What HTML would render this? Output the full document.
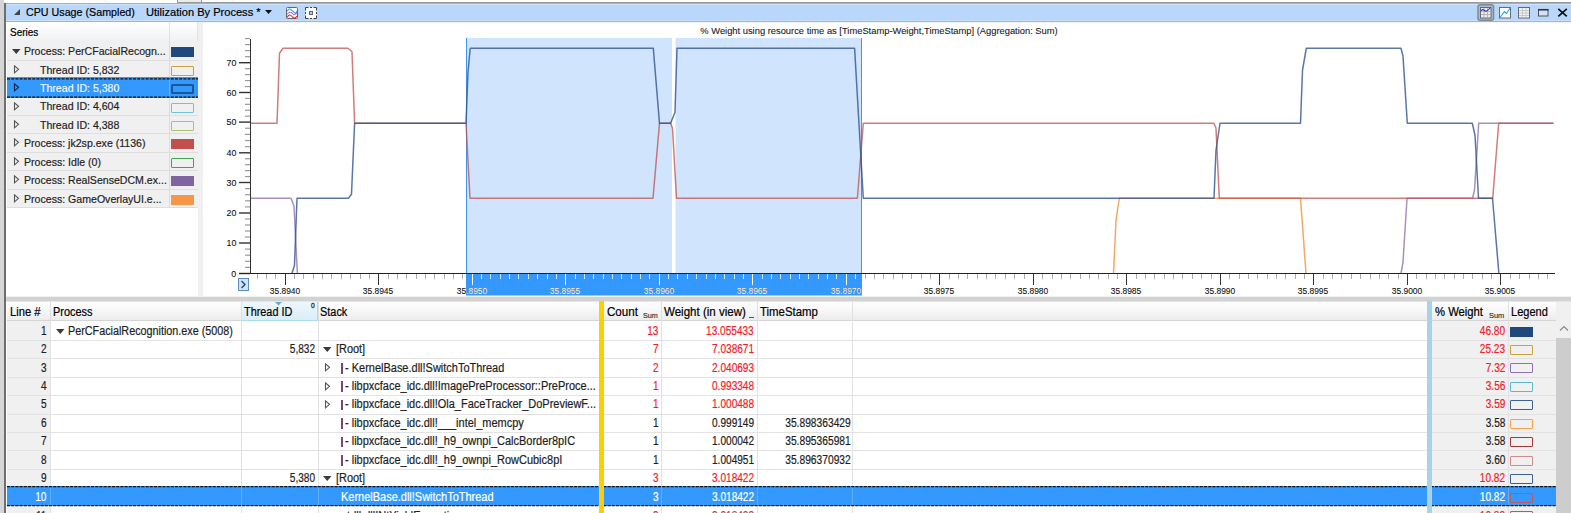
<!DOCTYPE html>
<html><head><meta charset="utf-8">
<style>
*{margin:0;padding:0;box-sizing:border-box}
html,body{width:1571px;height:513px;overflow:hidden;background:#fff}
body{position:relative;font-family:"Liberation Sans",sans-serif;font-size:11px;color:#1e1e1e}
.a{position:absolute}
.t{position:absolute;white-space:nowrap}
.num{letter-spacing:-0.4px}
</style></head><body>
<div class="a" style="left:0px;top:0px;width:4px;height:513px;background:#d6d6d6"></div>
<div class="a" style="left:4px;top:3px;width:2px;height:510px;background:#6e6e6e"></div>
<div class="a" style="left:177px;top:0px;width:25px;height:3px;background:#ebebeb;border:1px solid #9a9a9a;border-top:none"></div>
<div class="a" style="left:202px;top:2px;width:1369px;height:1px;background:#9a9a9a"></div>
<div class="a" style="left:6px;top:3px;width:1565px;height:19px;background:#b8d7fa;border-top:1px solid #8fb3e0;border-bottom:1px solid #93b8e6"></div>
<div class="a" style="left:6px;top:4px;width:1565px;height:1px;background:#cde3fb"></div>
<div class="a" style="left:6px;top:20px;width:1565px;height:1px;background:#c8e0fb"></div>
<svg class="a" style="left:13px;top:8px" width="8" height="8"><path d="M7 1 L7 7 L1 7 Z" fill="#444"/></svg>
<div class="t" style="left:26.2px;top:3.68px;font-size:11.3px;line-height:16px;color:#000;-webkit-text-stroke:0.2px #000;transform:scaleX(0.9476);transform-origin:0 0;">CPU Usage (Sampled)</div>
<div class="t" style="left:146.2px;top:3.68px;font-size:11.3px;line-height:16px;color:#000;-webkit-text-stroke:0.2px #000;transform:scaleX(0.9811);transform-origin:0 0;">Utilization By Process *</div>
<svg class="a" style="left:265px;top:10px" width="8" height="5"><path d="M0 0 L7 0 L3.5 4 Z" fill="#111"/></svg>
<svg class="a" style="left:286px;top:7px" width="12" height="12">
<rect x="0.5" y="0.5" width="11" height="11" rx="1" fill="#fff" stroke="#666"/>
<path d="M1 4.5 Q3 0.5 5.5 3 T11 7" stroke="#30b4ea" fill="none" stroke-width="1.1"/>
<path d="M1 7.5 Q4 3.5 6.5 6.5 T11 4" stroke="#a468d0" fill="none" stroke-width="1.1"/>
<path d="M1 10.5 Q3.5 6 6 9.5 T11 9" stroke="#f02020" fill="none" stroke-width="1.1"/>
</svg>
<svg class="a" style="left:305px;top:7px" width="12" height="12">
<rect x="0.5" y="0.5" width="11" height="11" fill="#fff"/>
<path d="M0.5 3.5 V0.5 H3.5 M8.5 0.5 H11.5 V3.5 M11.5 8.5 V11.5 H8.5 M3.5 11.5 H0.5 V8.5 M5 0.5 H7 M11.5 5 V7 M5 11.5 H7 M0.5 5 V7" stroke="#444" fill="none"/>
<rect x="4.5" y="4.5" width="3" height="3" fill="#a8d0f0" stroke="#666"/>
</svg>
<svg class="a" style="left:1477px;top:4px" width="94" height="17">
<rect x="1" y="0.75" width="15.5" height="15.5" rx="2" fill="#a9bdd2" stroke="#7d8a99" stroke-width="1.5"/>
<rect x="3.5" y="3.5" width="10.5" height="10.5" fill="#ececec" stroke="#6a6a6a"/>
<path d="M4 7.5 h9.5 M4 10.5 h9.5 M7 4 v9.5 M10.5 4 v9.5" stroke="#b0b0b0" stroke-width="0.9"/>
<path d="M4 7 Q5.5 4.5 7.5 6.5 T13.5 3.5" stroke="#3838c8" fill="none" stroke-width="1.1"/>
<rect x="22.5" y="3.5" width="11" height="10.5" fill="#fff" stroke="#6a6a6a"/>
<path d="M23 13.5 L27.5 7.5 L29.5 9.5 L33.5 3.5" stroke="#1aa0e8" fill="none" stroke-width="1.1"/>
<rect x="41.5" y="3.5" width="11" height="10.5" fill="#f2f2f2" stroke="#6a6a6a"/>
<path d="M42 6.5 h10 M42 9 h10 M42 11.5 h10 M45.5 4 v9.5 M49 4 v9.5" stroke="#c4c4c4" stroke-width="0.9"/>
<rect x="61.5" y="5.5" width="9.5" height="6.5" fill="#cfe2f8" stroke="#555"/>
<path d="M61 5.75 h10.5" stroke="#333" stroke-width="1.6"/>
<path d="M81.3 4.8 L89.8 12.4 M89.8 4.8 L81.3 12.4" stroke="#111" stroke-width="1.7"/>
</svg>
<div class="a" style="left:7px;top:22px;width:191px;height:19.5px;background:linear-gradient(#ffffff,#eff1f4);border-bottom:1px solid #d9d9d9;border-right:1px solid #e2e2e2"></div>
<div class="a" style="left:169px;top:22px;width:1px;height:19px;background:#e2e2e2"></div>
<div class="t" style="left:9.7px;top:24.02px;font-size:11.5px;line-height:16px;color:#000;-webkit-text-stroke:0.2px #000;transform:scaleX(0.8682);transform-origin:0 0;">Series</div>
<div class="a" style="left:198px;top:22px;width:5px;height:274px;background:#f0f0f0"></div>
<div class="a" style="left:7px;top:41.2px;width:191px;height:166.96px;background:#f0f0f0"></div>
<div class="a" style="left:7px;top:59.64px;width:191px;height:1px;background:#dedede"></div>
<div class="a" style="left:7px;top:114.96px;width:191px;height:1px;background:#dedede"></div>
<div class="a" style="left:7px;top:133.4px;width:191px;height:1px;background:#dedede"></div>
<div class="a" style="left:7px;top:151.84px;width:191px;height:1px;background:#dedede"></div>
<div class="a" style="left:7px;top:170.28px;width:191px;height:1px;background:#dedede"></div>
<div class="a" style="left:7px;top:188.72px;width:191px;height:1px;background:#dedede"></div>
<div class="a" style="left:7px;top:207.16px;width:191px;height:1px;background:#dedede"></div>
<div class="a" style="left:169px;top:41.2px;width:1px;height:165.96px;background:#dcdcdc"></div>
<div class="a" style="left:7px;top:77px;width:191px;height:21px;background:#3399ff"></div>
<div class="a" style="left:169px;top:77px;width:1px;height:21px;background:rgba(255,255,255,0.25)"></div>
<svg class="a" style="left:12px;top:49.00px" width="9" height="6"><path d="M0 0 L8.5 0 L4.25 5 Z" fill="#3b3b3b"/></svg>
<div class="t" style="left:24.4px;top:43.15px;font-size:11.7px;line-height:16px;color:#1e1e1e;-webkit-text-stroke:0.2px #1e1e1e;transform:scaleX(0.9050);transform-origin:0 0;">Process: PerCFacialRecogn...</div>
<div class="a" style="left:171px;top:47.2px;width:23px;height:10px;background:#1f497d"></div>
<svg class="a" style="left:13px;top:64.64px" width="7" height="9"><path d="M1.5 0.8 L5.5 4.3 L1.5 7.8 Z" fill="none" stroke="#555" stroke-width="1.1"/></svg>
<div class="t" style="left:40px;top:61.59px;font-size:11.7px;line-height:16px;color:#1e1e1e;-webkit-text-stroke:0.2px #1e1e1e;transform:scaleX(0.9050);transform-origin:0 0;">Thread ID: 5,832</div>
<div class="a" style="left:171px;top:65.64px;width:23px;height:10px;border:1.5px solid #c9a13e;border-radius:1px;background:#f0f0f0"></div>
<svg class="a" style="left:13px;top:83.08px" width="7" height="9"><path d="M1.5 0.8 L5.5 4.3 L1.5 7.8 Z" fill="none" stroke="#10203a" stroke-width="1.1"/></svg>
<div class="t" style="left:40px;top:80.03px;font-size:11.7px;line-height:16px;color:#f4f8ff;-webkit-text-stroke:0.2px #f4f8ff;transform:scaleX(0.9050);transform-origin:0 0;">Thread ID: 5,380</div>
<div class="a" style="left:171px;top:84.08px;width:23px;height:10px;border:2px solid #1f5590;border-radius:1.5px;background:#3399ff"></div>
<svg class="a" style="left:13px;top:101.52px" width="7" height="9"><path d="M1.5 0.8 L5.5 4.3 L1.5 7.8 Z" fill="none" stroke="#555" stroke-width="1.1"/></svg>
<div class="t" style="left:40px;top:98.47px;font-size:11.7px;line-height:16px;color:#1e1e1e;-webkit-text-stroke:0.2px #1e1e1e;transform:scaleX(0.9050);transform-origin:0 0;">Thread ID: 4,604</div>
<div class="a" style="left:171px;top:102.52px;width:23px;height:10px;border:1.5px solid #71c1d8;border-radius:1px;background:#f0f0f0"></div>
<svg class="a" style="left:13px;top:119.96px" width="7" height="9"><path d="M1.5 0.8 L5.5 4.3 L1.5 7.8 Z" fill="none" stroke="#555" stroke-width="1.1"/></svg>
<div class="t" style="left:40px;top:116.91px;font-size:11.7px;line-height:16px;color:#1e1e1e;-webkit-text-stroke:0.2px #1e1e1e;transform:scaleX(0.9050);transform-origin:0 0;">Thread ID: 4,388</div>
<div class="a" style="left:171px;top:120.96px;width:23px;height:10px;border:1.5px solid #a6c273;border-radius:1px;background:#f0f0f0"></div>
<svg class="a" style="left:13px;top:138.40px" width="7" height="9"><path d="M1.5 0.8 L5.5 4.3 L1.5 7.8 Z" fill="none" stroke="#555" stroke-width="1.1"/></svg>
<div class="t" style="left:24.4px;top:135.35px;font-size:11.7px;line-height:16px;color:#1e1e1e;-webkit-text-stroke:0.2px #1e1e1e;transform:scaleX(0.9050);transform-origin:0 0;">Process: jk2sp.exe (1136)</div>
<div class="a" style="left:171px;top:139.4px;width:23px;height:10px;background:#c0504d"></div>
<svg class="a" style="left:13px;top:156.84px" width="7" height="9"><path d="M1.5 0.8 L5.5 4.3 L1.5 7.8 Z" fill="none" stroke="#555" stroke-width="1.1"/></svg>
<div class="t" style="left:24.4px;top:153.79px;font-size:11.7px;line-height:16px;color:#1e1e1e;-webkit-text-stroke:0.2px #1e1e1e;transform:scaleX(0.9050);transform-origin:0 0;">Process: Idle (0)</div>
<div class="a" style="left:171px;top:157.84px;width:23px;height:10px;border:1.5px solid #3fa454;border-radius:1px;background:#f0f0f0"></div>
<svg class="a" style="left:13px;top:175.28px" width="7" height="9"><path d="M1.5 0.8 L5.5 4.3 L1.5 7.8 Z" fill="none" stroke="#555" stroke-width="1.1"/></svg>
<div class="t" style="left:24.4px;top:172.23px;font-size:11.7px;line-height:16px;color:#1e1e1e;-webkit-text-stroke:0.2px #1e1e1e;transform:scaleX(0.9050);transform-origin:0 0;">Process: RealSenseDCM.ex...</div>
<div class="a" style="left:171px;top:176.28px;width:23px;height:10px;background:#8064a2"></div>
<svg class="a" style="left:13px;top:193.72px" width="7" height="9"><path d="M1.5 0.8 L5.5 4.3 L1.5 7.8 Z" fill="none" stroke="#555" stroke-width="1.1"/></svg>
<div class="t" style="left:24.4px;top:190.67px;font-size:11.7px;line-height:16px;color:#1e1e1e;-webkit-text-stroke:0.2px #1e1e1e;transform:scaleX(0.9050);transform-origin:0 0;">Process: GameOverlayUI.e...</div>
<div class="a" style="left:171px;top:194.72px;width:23px;height:10px;background:#f79646"></div>
<svg class="a" style="left:7px;top:70px" width="191" height="35"><line x1="0" y1="8.9" x2="191" y2="8.9" stroke="#111" stroke-width="1.2" stroke-dasharray="3 1.2"/><line x1="0" y1="27.1" x2="191" y2="27.1" stroke="#111" stroke-width="1.2" stroke-dasharray="3 1.2"/></svg>
<div class="a" style="left:203px;top:22px;width:1368px;height:1px;background:#f3f6fa"></div>
<div class="t" style="left:479.35px;width:800px;top:22.74px;font-size:9.4px;line-height:16px;color:#222;-webkit-text-stroke:0.1px #222;text-align:center;transform:scaleX(0.9969);transform-origin:50% 0;">% Weight using resource time as [TimeStamp-Weight,TimeStamp] (Aggregation: Sum)</div>
<svg class="a" style="left:0;top:0" width="1571" height="513"><rect x="466" y="38" width="396" height="235" fill="#d0e5fd"/><rect x="672" y="38" width="3.5" height="235" fill="#ffffff"/><rect x="466" y="273" width="396" height="22.5" fill="#3399ff"/><line x1="466.5" y1="38" x2="466.5" y2="295" stroke="#3d97ee" stroke-width="1"/><line x1="861.5" y1="38" x2="861.5" y2="295" stroke="#3d97ee" stroke-width="1"/><polyline points="1113.5,273.5 1116,220.25 1119.3,198.25 1300.5,198.25 1302.5,225.25 1306,273.5" fill="none" stroke="#f79646" stroke-width="1.5" stroke-opacity="0.85" stroke-linejoin="round"/><polyline points="251,198.25 291,198.25 294,206.25 297.4,273.5" fill="none" stroke="#8064a2" stroke-width="1.5" stroke-opacity="0.7" stroke-linejoin="round"/><polyline points="1401,273.5 1403,262.25 1407,198.25 1472.5,198.25 1474.5,190.25 1478.7,123.25 1553.5,123.25" fill="none" stroke="#8064a2" stroke-width="1.5" stroke-opacity="0.7" stroke-linejoin="round"/><polyline points="251,123.25 277,123.25 279.5,53.25 283,48.25 348,48.25 352,51.75 354.6,123.25 466,123.25 470,198.25 653,198.25 659.5,123.25 670.6,123.25 672.5,128.25 676.5,198.25 857.4,198.25 863.3,123.25 1214,123.25 1216,128.25 1219.3,198.25 1492.7,198.25 1498.7,123.25 1553.5,123.25" fill="none" stroke="#c0504d" stroke-width="1.5" stroke-opacity="0.75" stroke-linejoin="round"/><polyline points="291.9,273.5 294.5,265.25 297,198.25 348.4,198.25 351.5,194.25 354.6,123.25 466,123.25 468,72.25 470.2,48.25 653.3,48.25 659.5,123.25 670.6,123.25 675,112.25 677,48.25 854.6,48.25 863.3,198.25 1214,198.25 1216,150.25 1220,123.25 1300.5,123.25 1302.5,70.25 1306.3,48.25 1401,48.25 1403,56.25 1407.3,123.25 1472.3,123.25 1475,135.25 1478.5,198.25 1492.5,198.25 1498.9,273.5" fill="none" stroke="#2f5590" stroke-width="1.5" stroke-opacity="0.8" stroke-linejoin="round"/><line x1="250.5" y1="39" x2="250.5" y2="273.5" stroke="#333" stroke-width="1"/><line x1="239" y1="273.50" x2="250" y2="273.50" stroke="#333" stroke-width="1.4"/><line x1="245" y1="267.40" x2="250" y2="267.40" stroke="#9a9a9a" stroke-width="1.2"/><line x1="245" y1="261.30" x2="250" y2="261.30" stroke="#9a9a9a" stroke-width="1.2"/><line x1="245" y1="255.20" x2="250" y2="255.20" stroke="#9a9a9a" stroke-width="1.2"/><line x1="245" y1="249.10" x2="250" y2="249.10" stroke="#9a9a9a" stroke-width="1.2"/><line x1="239" y1="243.00" x2="250" y2="243.00" stroke="#333" stroke-width="1.4"/><line x1="245" y1="237.00" x2="250" y2="237.00" stroke="#9a9a9a" stroke-width="1.2"/><line x1="245" y1="231.00" x2="250" y2="231.00" stroke="#9a9a9a" stroke-width="1.2"/><line x1="245" y1="225.00" x2="250" y2="225.00" stroke="#9a9a9a" stroke-width="1.2"/><line x1="245" y1="219.00" x2="250" y2="219.00" stroke="#9a9a9a" stroke-width="1.2"/><line x1="239" y1="213.00" x2="250" y2="213.00" stroke="#333" stroke-width="1.4"/><line x1="245" y1="206.90" x2="250" y2="206.90" stroke="#9a9a9a" stroke-width="1.2"/><line x1="245" y1="200.80" x2="250" y2="200.80" stroke="#9a9a9a" stroke-width="1.2"/><line x1="245" y1="194.70" x2="250" y2="194.70" stroke="#9a9a9a" stroke-width="1.2"/><line x1="245" y1="188.60" x2="250" y2="188.60" stroke="#9a9a9a" stroke-width="1.2"/><line x1="239" y1="182.50" x2="250" y2="182.50" stroke="#333" stroke-width="1.4"/><line x1="245" y1="176.56" x2="250" y2="176.56" stroke="#9a9a9a" stroke-width="1.2"/><line x1="245" y1="170.62" x2="250" y2="170.62" stroke="#9a9a9a" stroke-width="1.2"/><line x1="245" y1="164.68" x2="250" y2="164.68" stroke="#9a9a9a" stroke-width="1.2"/><line x1="245" y1="158.74" x2="250" y2="158.74" stroke="#9a9a9a" stroke-width="1.2"/><line x1="239" y1="152.80" x2="250" y2="152.80" stroke="#333" stroke-width="1.4"/><line x1="245" y1="146.66" x2="250" y2="146.66" stroke="#9a9a9a" stroke-width="1.2"/><line x1="245" y1="140.52" x2="250" y2="140.52" stroke="#9a9a9a" stroke-width="1.2"/><line x1="245" y1="134.38" x2="250" y2="134.38" stroke="#9a9a9a" stroke-width="1.2"/><line x1="245" y1="128.24" x2="250" y2="128.24" stroke="#9a9a9a" stroke-width="1.2"/><line x1="239" y1="122.10" x2="250" y2="122.10" stroke="#333" stroke-width="1.4"/><line x1="245" y1="116.18" x2="250" y2="116.18" stroke="#9a9a9a" stroke-width="1.2"/><line x1="245" y1="110.26" x2="250" y2="110.26" stroke="#9a9a9a" stroke-width="1.2"/><line x1="245" y1="104.34" x2="250" y2="104.34" stroke="#9a9a9a" stroke-width="1.2"/><line x1="245" y1="98.42" x2="250" y2="98.42" stroke="#9a9a9a" stroke-width="1.2"/><line x1="239" y1="92.50" x2="250" y2="92.50" stroke="#333" stroke-width="1.4"/><line x1="245" y1="86.54" x2="250" y2="86.54" stroke="#9a9a9a" stroke-width="1.2"/><line x1="245" y1="80.58" x2="250" y2="80.58" stroke="#9a9a9a" stroke-width="1.2"/><line x1="245" y1="74.62" x2="250" y2="74.62" stroke="#9a9a9a" stroke-width="1.2"/><line x1="245" y1="68.66" x2="250" y2="68.66" stroke="#9a9a9a" stroke-width="1.2"/><line x1="239" y1="62.70" x2="250" y2="62.70" stroke="#333" stroke-width="1.4"/><line x1="245" y1="56.66" x2="250" y2="56.66" stroke="#9a9a9a" stroke-width="1.2"/><line x1="245" y1="50.62" x2="250" y2="50.62" stroke="#9a9a9a" stroke-width="1.2"/><line x1="245" y1="44.58" x2="250" y2="44.58" stroke="#9a9a9a" stroke-width="1.2"/><line x1="245" y1="38.54" x2="250" y2="38.54" stroke="#9a9a9a" stroke-width="1.2"/><line x1="239" y1="273.5" x2="1555" y2="273.5" stroke="#222" stroke-width="1"/><line x1="257.5" y1="274" x2="257.5" y2="279" stroke="#ababab" stroke-width="1"/><line x1="266.5" y1="274" x2="266.5" y2="279" stroke="#ababab" stroke-width="1"/><line x1="275.5" y1="274" x2="275.5" y2="279" stroke="#ababab" stroke-width="1"/><line x1="285.5" y1="274" x2="285.5" y2="285" stroke="#333" stroke-width="1"/><line x1="294.5" y1="274" x2="294.5" y2="279" stroke="#ababab" stroke-width="1"/><line x1="303.5" y1="274" x2="303.5" y2="279" stroke="#ababab" stroke-width="1"/><line x1="313.5" y1="274" x2="313.5" y2="279" stroke="#ababab" stroke-width="1"/><line x1="322.5" y1="274" x2="322.5" y2="279" stroke="#ababab" stroke-width="1"/><line x1="331.5" y1="274" x2="331.5" y2="279" stroke="#ababab" stroke-width="1"/><line x1="341.5" y1="274" x2="341.5" y2="279" stroke="#ababab" stroke-width="1"/><line x1="350.5" y1="274" x2="350.5" y2="279" stroke="#ababab" stroke-width="1"/><line x1="360.5" y1="274" x2="360.5" y2="279" stroke="#ababab" stroke-width="1"/><line x1="369.5" y1="274" x2="369.5" y2="279" stroke="#ababab" stroke-width="1"/><line x1="378.5" y1="274" x2="378.5" y2="285" stroke="#333" stroke-width="1"/><line x1="388.5" y1="274" x2="388.5" y2="279" stroke="#ababab" stroke-width="1"/><line x1="397.5" y1="274" x2="397.5" y2="279" stroke="#ababab" stroke-width="1"/><line x1="406.5" y1="274" x2="406.5" y2="279" stroke="#ababab" stroke-width="1"/><line x1="416.5" y1="274" x2="416.5" y2="279" stroke="#ababab" stroke-width="1"/><line x1="425.5" y1="274" x2="425.5" y2="279" stroke="#ababab" stroke-width="1"/><line x1="434.5" y1="274" x2="434.5" y2="279" stroke="#ababab" stroke-width="1"/><line x1="444.5" y1="274" x2="444.5" y2="279" stroke="#ababab" stroke-width="1"/><line x1="453.5" y1="274" x2="453.5" y2="279" stroke="#ababab" stroke-width="1"/><line x1="462.5" y1="274" x2="462.5" y2="279" stroke="#ababab" stroke-width="1"/><line x1="472.5" y1="274" x2="472.5" y2="285" stroke="#ffffff" stroke-width="1"/><line x1="481.5" y1="274" x2="481.5" y2="279" stroke="#cfe6ff" stroke-width="1"/><line x1="490.5" y1="274" x2="490.5" y2="279" stroke="#cfe6ff" stroke-width="1"/><line x1="500.5" y1="274" x2="500.5" y2="279" stroke="#cfe6ff" stroke-width="1"/><line x1="509.5" y1="274" x2="509.5" y2="279" stroke="#cfe6ff" stroke-width="1"/><line x1="518.5" y1="274" x2="518.5" y2="279" stroke="#cfe6ff" stroke-width="1"/><line x1="528.5" y1="274" x2="528.5" y2="279" stroke="#cfe6ff" stroke-width="1"/><line x1="537.5" y1="274" x2="537.5" y2="279" stroke="#cfe6ff" stroke-width="1"/><line x1="547.5" y1="274" x2="547.5" y2="279" stroke="#cfe6ff" stroke-width="1"/><line x1="556.5" y1="274" x2="556.5" y2="279" stroke="#cfe6ff" stroke-width="1"/><line x1="565.5" y1="274" x2="565.5" y2="285" stroke="#ffffff" stroke-width="1"/><line x1="575.5" y1="274" x2="575.5" y2="279" stroke="#cfe6ff" stroke-width="1"/><line x1="584.5" y1="274" x2="584.5" y2="279" stroke="#cfe6ff" stroke-width="1"/><line x1="593.5" y1="274" x2="593.5" y2="279" stroke="#cfe6ff" stroke-width="1"/><line x1="603.5" y1="274" x2="603.5" y2="279" stroke="#cfe6ff" stroke-width="1"/><line x1="612.5" y1="274" x2="612.5" y2="279" stroke="#cfe6ff" stroke-width="1"/><line x1="621.5" y1="274" x2="621.5" y2="279" stroke="#cfe6ff" stroke-width="1"/><line x1="631.5" y1="274" x2="631.5" y2="279" stroke="#cfe6ff" stroke-width="1"/><line x1="640.5" y1="274" x2="640.5" y2="279" stroke="#cfe6ff" stroke-width="1"/><line x1="649.5" y1="274" x2="649.5" y2="279" stroke="#cfe6ff" stroke-width="1"/><line x1="659.5" y1="274" x2="659.5" y2="285" stroke="#ffffff" stroke-width="1"/><line x1="668.5" y1="274" x2="668.5" y2="279" stroke="#cfe6ff" stroke-width="1"/><line x1="677.5" y1="274" x2="677.5" y2="279" stroke="#cfe6ff" stroke-width="1"/><line x1="687.5" y1="274" x2="687.5" y2="279" stroke="#cfe6ff" stroke-width="1"/><line x1="696.5" y1="274" x2="696.5" y2="279" stroke="#cfe6ff" stroke-width="1"/><line x1="706.5" y1="274" x2="706.5" y2="279" stroke="#cfe6ff" stroke-width="1"/><line x1="715.5" y1="274" x2="715.5" y2="279" stroke="#cfe6ff" stroke-width="1"/><line x1="724.5" y1="274" x2="724.5" y2="279" stroke="#cfe6ff" stroke-width="1"/><line x1="734.5" y1="274" x2="734.5" y2="279" stroke="#cfe6ff" stroke-width="1"/><line x1="743.5" y1="274" x2="743.5" y2="279" stroke="#cfe6ff" stroke-width="1"/><line x1="752.5" y1="274" x2="752.5" y2="285" stroke="#ffffff" stroke-width="1"/><line x1="762.5" y1="274" x2="762.5" y2="279" stroke="#cfe6ff" stroke-width="1"/><line x1="771.5" y1="274" x2="771.5" y2="279" stroke="#cfe6ff" stroke-width="1"/><line x1="780.5" y1="274" x2="780.5" y2="279" stroke="#cfe6ff" stroke-width="1"/><line x1="790.5" y1="274" x2="790.5" y2="279" stroke="#cfe6ff" stroke-width="1"/><line x1="799.5" y1="274" x2="799.5" y2="279" stroke="#cfe6ff" stroke-width="1"/><line x1="808.5" y1="274" x2="808.5" y2="279" stroke="#cfe6ff" stroke-width="1"/><line x1="818.5" y1="274" x2="818.5" y2="279" stroke="#cfe6ff" stroke-width="1"/><line x1="827.5" y1="274" x2="827.5" y2="279" stroke="#cfe6ff" stroke-width="1"/><line x1="836.5" y1="274" x2="836.5" y2="279" stroke="#cfe6ff" stroke-width="1"/><line x1="846.5" y1="274" x2="846.5" y2="285" stroke="#ffffff" stroke-width="1"/><line x1="855.5" y1="274" x2="855.5" y2="279" stroke="#cfe6ff" stroke-width="1"/><line x1="865.5" y1="274" x2="865.5" y2="279" stroke="#ababab" stroke-width="1"/><line x1="874.5" y1="274" x2="874.5" y2="279" stroke="#ababab" stroke-width="1"/><line x1="883.5" y1="274" x2="883.5" y2="279" stroke="#ababab" stroke-width="1"/><line x1="893.5" y1="274" x2="893.5" y2="279" stroke="#ababab" stroke-width="1"/><line x1="902.5" y1="274" x2="902.5" y2="279" stroke="#ababab" stroke-width="1"/><line x1="911.5" y1="274" x2="911.5" y2="279" stroke="#ababab" stroke-width="1"/><line x1="921.5" y1="274" x2="921.5" y2="279" stroke="#ababab" stroke-width="1"/><line x1="930.5" y1="274" x2="930.5" y2="279" stroke="#ababab" stroke-width="1"/><line x1="939.5" y1="274" x2="939.5" y2="285" stroke="#333" stroke-width="1"/><line x1="949.5" y1="274" x2="949.5" y2="279" stroke="#ababab" stroke-width="1"/><line x1="958.5" y1="274" x2="958.5" y2="279" stroke="#ababab" stroke-width="1"/><line x1="967.5" y1="274" x2="967.5" y2="279" stroke="#ababab" stroke-width="1"/><line x1="977.5" y1="274" x2="977.5" y2="279" stroke="#ababab" stroke-width="1"/><line x1="986.5" y1="274" x2="986.5" y2="279" stroke="#ababab" stroke-width="1"/><line x1="995.5" y1="274" x2="995.5" y2="279" stroke="#ababab" stroke-width="1"/><line x1="1005.5" y1="274" x2="1005.5" y2="279" stroke="#ababab" stroke-width="1"/><line x1="1014.5" y1="274" x2="1014.5" y2="279" stroke="#ababab" stroke-width="1"/><line x1="1024.5" y1="274" x2="1024.5" y2="279" stroke="#ababab" stroke-width="1"/><line x1="1033.5" y1="274" x2="1033.5" y2="285" stroke="#333" stroke-width="1"/><line x1="1042.5" y1="274" x2="1042.5" y2="279" stroke="#ababab" stroke-width="1"/><line x1="1052.5" y1="274" x2="1052.5" y2="279" stroke="#ababab" stroke-width="1"/><line x1="1061.5" y1="274" x2="1061.5" y2="279" stroke="#ababab" stroke-width="1"/><line x1="1070.5" y1="274" x2="1070.5" y2="279" stroke="#ababab" stroke-width="1"/><line x1="1080.5" y1="274" x2="1080.5" y2="279" stroke="#ababab" stroke-width="1"/><line x1="1089.5" y1="274" x2="1089.5" y2="279" stroke="#ababab" stroke-width="1"/><line x1="1098.5" y1="274" x2="1098.5" y2="279" stroke="#ababab" stroke-width="1"/><line x1="1108.5" y1="274" x2="1108.5" y2="279" stroke="#ababab" stroke-width="1"/><line x1="1117.5" y1="274" x2="1117.5" y2="279" stroke="#ababab" stroke-width="1"/><line x1="1126.5" y1="274" x2="1126.5" y2="285" stroke="#333" stroke-width="1"/><line x1="1136.5" y1="274" x2="1136.5" y2="279" stroke="#ababab" stroke-width="1"/><line x1="1145.5" y1="274" x2="1145.5" y2="279" stroke="#ababab" stroke-width="1"/><line x1="1154.5" y1="274" x2="1154.5" y2="279" stroke="#ababab" stroke-width="1"/><line x1="1164.5" y1="274" x2="1164.5" y2="279" stroke="#ababab" stroke-width="1"/><line x1="1173.5" y1="274" x2="1173.5" y2="279" stroke="#ababab" stroke-width="1"/><line x1="1182.5" y1="274" x2="1182.5" y2="279" stroke="#ababab" stroke-width="1"/><line x1="1192.5" y1="274" x2="1192.5" y2="279" stroke="#ababab" stroke-width="1"/><line x1="1201.5" y1="274" x2="1201.5" y2="279" stroke="#ababab" stroke-width="1"/><line x1="1211.5" y1="274" x2="1211.5" y2="279" stroke="#ababab" stroke-width="1"/><line x1="1220.5" y1="274" x2="1220.5" y2="285" stroke="#333" stroke-width="1"/><line x1="1229.5" y1="274" x2="1229.5" y2="279" stroke="#ababab" stroke-width="1"/><line x1="1239.5" y1="274" x2="1239.5" y2="279" stroke="#ababab" stroke-width="1"/><line x1="1248.5" y1="274" x2="1248.5" y2="279" stroke="#ababab" stroke-width="1"/><line x1="1257.5" y1="274" x2="1257.5" y2="279" stroke="#ababab" stroke-width="1"/><line x1="1267.5" y1="274" x2="1267.5" y2="279" stroke="#ababab" stroke-width="1"/><line x1="1276.5" y1="274" x2="1276.5" y2="279" stroke="#ababab" stroke-width="1"/><line x1="1285.5" y1="274" x2="1285.5" y2="279" stroke="#ababab" stroke-width="1"/><line x1="1295.5" y1="274" x2="1295.5" y2="279" stroke="#ababab" stroke-width="1"/><line x1="1304.5" y1="274" x2="1304.5" y2="279" stroke="#ababab" stroke-width="1"/><line x1="1313.5" y1="274" x2="1313.5" y2="285" stroke="#333" stroke-width="1"/><line x1="1323.5" y1="274" x2="1323.5" y2="279" stroke="#ababab" stroke-width="1"/><line x1="1332.5" y1="274" x2="1332.5" y2="279" stroke="#ababab" stroke-width="1"/><line x1="1341.5" y1="274" x2="1341.5" y2="279" stroke="#ababab" stroke-width="1"/><line x1="1351.5" y1="274" x2="1351.5" y2="279" stroke="#ababab" stroke-width="1"/><line x1="1360.5" y1="274" x2="1360.5" y2="279" stroke="#ababab" stroke-width="1"/><line x1="1370.5" y1="274" x2="1370.5" y2="279" stroke="#ababab" stroke-width="1"/><line x1="1379.5" y1="274" x2="1379.5" y2="279" stroke="#ababab" stroke-width="1"/><line x1="1388.5" y1="274" x2="1388.5" y2="279" stroke="#ababab" stroke-width="1"/><line x1="1398.5" y1="274" x2="1398.5" y2="279" stroke="#ababab" stroke-width="1"/><line x1="1407.5" y1="274" x2="1407.5" y2="285" stroke="#333" stroke-width="1"/><line x1="1416.5" y1="274" x2="1416.5" y2="279" stroke="#ababab" stroke-width="1"/><line x1="1426.5" y1="274" x2="1426.5" y2="279" stroke="#ababab" stroke-width="1"/><line x1="1435.5" y1="274" x2="1435.5" y2="279" stroke="#ababab" stroke-width="1"/><line x1="1444.5" y1="274" x2="1444.5" y2="279" stroke="#ababab" stroke-width="1"/><line x1="1454.5" y1="274" x2="1454.5" y2="279" stroke="#ababab" stroke-width="1"/><line x1="1463.5" y1="274" x2="1463.5" y2="279" stroke="#ababab" stroke-width="1"/><line x1="1472.5" y1="274" x2="1472.5" y2="279" stroke="#ababab" stroke-width="1"/><line x1="1482.5" y1="274" x2="1482.5" y2="279" stroke="#ababab" stroke-width="1"/><line x1="1491.5" y1="274" x2="1491.5" y2="279" stroke="#ababab" stroke-width="1"/><line x1="1500.5" y1="274" x2="1500.5" y2="285" stroke="#333" stroke-width="1"/><line x1="1510.5" y1="274" x2="1510.5" y2="279" stroke="#ababab" stroke-width="1"/><line x1="1519.5" y1="274" x2="1519.5" y2="279" stroke="#ababab" stroke-width="1"/><line x1="1529.5" y1="274" x2="1529.5" y2="279" stroke="#ababab" stroke-width="1"/><line x1="1538.5" y1="274" x2="1538.5" y2="279" stroke="#ababab" stroke-width="1"/><line x1="1547.5" y1="274" x2="1547.5" y2="279" stroke="#ababab" stroke-width="1"/></svg>
<div class="t" style="right:1334.50px;top:265.68px;font-size:9.3px;line-height:16px;color:#111;-webkit-text-stroke:0.1px #111;text-align:right;transform:scaleX(0.9500);transform-origin:100% 0;">0</div>
<div class="t" style="right:1334.50px;top:235.18px;font-size:9.3px;line-height:16px;color:#111;-webkit-text-stroke:0.1px #111;text-align:right;transform:scaleX(0.9500);transform-origin:100% 0;">10</div>
<div class="t" style="right:1334.50px;top:205.18px;font-size:9.3px;line-height:16px;color:#111;-webkit-text-stroke:0.1px #111;text-align:right;transform:scaleX(0.9500);transform-origin:100% 0;">20</div>
<div class="t" style="right:1334.50px;top:174.68px;font-size:9.3px;line-height:16px;color:#111;-webkit-text-stroke:0.1px #111;text-align:right;transform:scaleX(0.9500);transform-origin:100% 0;">30</div>
<div class="t" style="right:1334.50px;top:144.98px;font-size:9.3px;line-height:16px;color:#111;-webkit-text-stroke:0.1px #111;text-align:right;transform:scaleX(0.9500);transform-origin:100% 0;">40</div>
<div class="t" style="right:1334.50px;top:114.28px;font-size:9.3px;line-height:16px;color:#111;-webkit-text-stroke:0.1px #111;text-align:right;transform:scaleX(0.9500);transform-origin:100% 0;">50</div>
<div class="t" style="right:1334.50px;top:84.68px;font-size:9.3px;line-height:16px;color:#111;-webkit-text-stroke:0.1px #111;text-align:right;transform:scaleX(0.9500);transform-origin:100% 0;">60</div>
<div class="t" style="right:1334.50px;top:54.88px;font-size:9.3px;line-height:16px;color:#111;-webkit-text-stroke:0.1px #111;text-align:right;transform:scaleX(0.9500);transform-origin:100% 0;">70</div>
<div class="t" style="left:-115.30px;width:800px;top:283.48px;font-size:9.3px;line-height:16px;color:#111;-webkit-text-stroke:0.1px #111;text-align:center;transform:scaleX(0.9073);transform-origin:50% 0;">35.8940</div>
<div class="t" style="left:-21.78px;width:800px;top:283.48px;font-size:9.3px;line-height:16px;color:#111;-webkit-text-stroke:0.1px #111;text-align:center;transform:scaleX(0.9073);transform-origin:50% 0;">35.8945</div>
<div class="t" style="left:71.74px;width:800px;top:283.48px;font-size:9.3px;line-height:16px;color:#111;-webkit-text-stroke:0.1px #111;text-align:center;transform:scaleX(0.9073);transform-origin:50% 0;">35.8950</div>
<div class="t" style="left:165.26px;width:800px;top:283.48px;font-size:9.3px;line-height:16px;color:#111;-webkit-text-stroke:0.1px #111;text-align:center;transform:scaleX(0.9073);transform-origin:50% 0;">35.8955</div>
<div class="t" style="left:258.78px;width:800px;top:283.48px;font-size:9.3px;line-height:16px;color:#111;-webkit-text-stroke:0.1px #111;text-align:center;transform:scaleX(0.9073);transform-origin:50% 0;">35.8960</div>
<div class="t" style="left:352.30px;width:800px;top:283.48px;font-size:9.3px;line-height:16px;color:#111;-webkit-text-stroke:0.1px #111;text-align:center;transform:scaleX(0.9073);transform-origin:50% 0;">35.8965</div>
<div class="t" style="left:445.82px;width:800px;top:283.48px;font-size:9.3px;line-height:16px;color:#111;-webkit-text-stroke:0.1px #111;text-align:center;transform:scaleX(0.9073);transform-origin:50% 0;">35.8970</div>
<div class="t" style="left:539.34px;width:800px;top:283.48px;font-size:9.3px;line-height:16px;color:#111;-webkit-text-stroke:0.1px #111;text-align:center;transform:scaleX(0.9073);transform-origin:50% 0;">35.8975</div>
<div class="t" style="left:632.86px;width:800px;top:283.48px;font-size:9.3px;line-height:16px;color:#111;-webkit-text-stroke:0.1px #111;text-align:center;transform:scaleX(0.9073);transform-origin:50% 0;">35.8980</div>
<div class="t" style="left:726.38px;width:800px;top:283.48px;font-size:9.3px;line-height:16px;color:#111;-webkit-text-stroke:0.1px #111;text-align:center;transform:scaleX(0.9073);transform-origin:50% 0;">35.8985</div>
<div class="t" style="left:819.90px;width:800px;top:283.48px;font-size:9.3px;line-height:16px;color:#111;-webkit-text-stroke:0.1px #111;text-align:center;transform:scaleX(0.9073);transform-origin:50% 0;">35.8990</div>
<div class="t" style="left:913.42px;width:800px;top:283.48px;font-size:9.3px;line-height:16px;color:#111;-webkit-text-stroke:0.1px #111;text-align:center;transform:scaleX(0.9073);transform-origin:50% 0;">35.8995</div>
<div class="t" style="left:1006.94px;width:800px;top:283.48px;font-size:9.3px;line-height:16px;color:#111;-webkit-text-stroke:0.1px #111;text-align:center;transform:scaleX(0.9073);transform-origin:50% 0;">35.9000</div>
<div class="t" style="left:1100.46px;width:800px;top:283.48px;font-size:9.3px;line-height:16px;color:#111;-webkit-text-stroke:0.1px #111;text-align:center;transform:scaleX(0.9073);transform-origin:50% 0;">35.9005</div>
<div class="a" style="left:466px;top:273px;width:396px;height:23px;overflow:hidden">
<div class="t" style="left:-394.26px;width:800px;top:10.48px;font-size:9.3px;line-height:16px;color:#fff;-webkit-text-stroke:0.1px #fff;text-align:center;transform:scaleX(0.9073);transform-origin:50% 0;">35.8950</div>
<div class="t" style="left:-300.74px;width:800px;top:10.48px;font-size:9.3px;line-height:16px;color:#fff;-webkit-text-stroke:0.1px #fff;text-align:center;transform:scaleX(0.9073);transform-origin:50% 0;">35.8955</div>
<div class="t" style="left:-207.22px;width:800px;top:10.48px;font-size:9.3px;line-height:16px;color:#fff;-webkit-text-stroke:0.1px #fff;text-align:center;transform:scaleX(0.9073);transform-origin:50% 0;">35.8960</div>
<div class="t" style="left:-113.70px;width:800px;top:10.48px;font-size:9.3px;line-height:16px;color:#fff;-webkit-text-stroke:0.1px #fff;text-align:center;transform:scaleX(0.9073);transform-origin:50% 0;">35.8965</div>
<div class="t" style="left:-20.18px;width:800px;top:10.48px;font-size:9.3px;line-height:16px;color:#fff;-webkit-text-stroke:0.1px #fff;text-align:center;transform:scaleX(0.9073);transform-origin:50% 0;">35.8970</div>
</div>
<svg class="a" style="left:238px;top:278px" width="11" height="13">
<rect x="0.5" y="0.5" width="10" height="12" fill="#cfe3f7" stroke="#5a8cc0"/>
<path d="M3.5 3 L7 6.5 L3.5 10" fill="none" stroke="#1e3c64" stroke-width="1.2"/>
</svg>
<div class="a" style="left:7px;top:301px;width:1549px;height:20px;background:linear-gradient(#ffffff 0%,#f7f7f7 50%,#ececec 100%);border-bottom:1px solid #d5d5d5"></div>
<div class="a" style="left:1556px;top:301px;width:15px;height:20px;background:#f0f0f0"></div>
<div class="a" style="left:241px;top:301px;width:77px;height:20px;background:linear-gradient(#eef7fd,#d9edf9);border:1px solid #a9daf3"></div>
<svg class="a" style="left:275px;top:302px" width="8" height="4"><path d="M0 0 L7 0 L3.5 3.5 Z" fill="#6aa8d0"/></svg>
<div class="t" style="left:311.2px;top:298.17px;font-size:7px;line-height:16px;color:#333;-webkit-text-stroke:0.35px #333;transform:scaleX(0.9500);transform-origin:0 0;">0</div>
<div class="a" style="left:49.5px;top:302px;width:1px;height:19px;background:#e0e0e0"></div>
<div class="a" style="left:241px;top:302px;width:1px;height:19px;background:#e0e0e0"></div>
<div class="a" style="left:318px;top:302px;width:1px;height:19px;background:#e0e0e0"></div>
<div class="a" style="left:661px;top:302px;width:1px;height:19px;background:#e0e0e0"></div>
<div class="a" style="left:757px;top:302px;width:1px;height:19px;background:#e0e0e0"></div>
<div class="a" style="left:852px;top:302px;width:1px;height:19px;background:#e0e0e0"></div>
<div class="a" style="left:1508px;top:302px;width:1px;height:19px;background:#e0e0e0"></div>
<div class="t" style="left:9.8px;top:303.64px;font-size:12px;line-height:16px;color:#000;-webkit-text-stroke:0.2px #000;transform:scaleX(0.9329);transform-origin:0 0;">Line #</div>
<div class="t" style="left:53px;top:303.64px;font-size:12px;line-height:16px;color:#000;-webkit-text-stroke:0.2px #000;transform:scaleX(0.9100);transform-origin:0 0;">Process</div>
<div class="t" style="left:244px;top:303.64px;font-size:12px;line-height:16px;color:#000;-webkit-text-stroke:0.2px #000;transform:scaleX(0.9053);transform-origin:0 0;">Thread ID</div>
<div class="t" style="left:320.3px;top:303.64px;font-size:12px;line-height:16px;color:#000;-webkit-text-stroke:0.2px #000;transform:scaleX(0.9100);transform-origin:0 0;">Stack</div>
<div class="t" style="left:606.9px;top:303.64px;font-size:12px;line-height:16px;color:#000;-webkit-text-stroke:0.2px #000;transform:scaleX(0.9650);transform-origin:0 0;">Count</div>
<div class="t" style="left:643px;top:307.90px;font-size:7.5px;line-height:16px;color:#222;-webkit-text-stroke:0.1px #222;transform:scaleX(0.9597);transform-origin:0 0;">Sum</div>
<div class="t" style="left:664.1px;top:303.64px;font-size:12px;line-height:16px;color:#000;-webkit-text-stroke:0.2px #000;transform:scaleX(0.9620);transform-origin:0 0;">Weight (in view)</div>
<div class="a" style="left:749px;top:317px;width:5px;height:1px;background:#555"></div>
<div class="t" style="left:759.9px;top:303.64px;font-size:12px;line-height:16px;color:#000;-webkit-text-stroke:0.2px #000;transform:scaleX(0.9490);transform-origin:0 0;">TimeStamp</div>
<div class="t" style="left:1435px;top:303.64px;font-size:12px;line-height:16px;color:#000;-webkit-text-stroke:0.2px #000;transform:scaleX(0.9387);transform-origin:0 0;">% Weight</div>
<div class="t" style="left:1489.2px;top:307.90px;font-size:7.5px;line-height:16px;color:#222;-webkit-text-stroke:0.1px #222;transform:scaleX(0.9921);transform-origin:0 0;">Sum</div>
<div class="t" style="left:1510.7px;top:303.64px;font-size:12px;line-height:16px;color:#000;-webkit-text-stroke:0.2px #000;transform:scaleX(0.9191);transform-origin:0 0;">Legend</div>
<div class="a" style="left:7px;top:321.3px;width:42.5px;height:191.7px;background:#f0f0f0"></div>
<div class="a" style="left:1431px;top:321.3px;width:125px;height:191.7px;background:#f0f0f0"></div>
<div class="a" style="left:7px;top:339.75px;width:1549px;height:1px;background:#e2e2e2"></div>
<div class="a" style="left:7px;top:358.2px;width:1549px;height:1px;background:#e2e2e2"></div>
<div class="a" style="left:7px;top:376.65px;width:1549px;height:1px;background:#e2e2e2"></div>
<div class="a" style="left:7px;top:395.1px;width:1549px;height:1px;background:#e2e2e2"></div>
<div class="a" style="left:7px;top:413.55px;width:1549px;height:1px;background:#e2e2e2"></div>
<div class="a" style="left:7px;top:432.0px;width:1549px;height:1px;background:#e2e2e2"></div>
<div class="a" style="left:7px;top:450.45px;width:1549px;height:1px;background:#e2e2e2"></div>
<div class="a" style="left:7px;top:468.9px;width:1549px;height:1px;background:#e2e2e2"></div>
<div class="a" style="left:7px;top:524.25px;width:1549px;height:1px;background:#e2e2e2"></div>
<div class="a" style="left:49.5px;top:321.3px;width:1px;height:191.7px;background:#e2e2e2"></div>
<div class="a" style="left:241px;top:321.3px;width:1px;height:191.7px;background:#e2e2e2"></div>
<div class="a" style="left:318px;top:321.3px;width:1px;height:191.7px;background:#e2e2e2"></div>
<div class="a" style="left:661px;top:321.3px;width:1px;height:191.7px;background:#e2e2e2"></div>
<div class="a" style="left:757px;top:321.3px;width:1px;height:191.7px;background:#e2e2e2"></div>
<div class="a" style="left:852px;top:321.3px;width:1px;height:191.7px;background:#e2e2e2"></div>
<div class="a" style="left:1508px;top:321.3px;width:1px;height:191.7px;background:#e2e2e2"></div>
<div class="a" style="left:7px;top:486px;width:1549px;height:20px;background:#3399ff"></div>
<div class="a" style="left:49.5px;top:486px;width:1px;height:20px;background:rgba(255,255,255,0.22)"></div>
<div class="a" style="left:241px;top:486px;width:1px;height:20px;background:rgba(255,255,255,0.22)"></div>
<div class="a" style="left:318px;top:486px;width:1px;height:20px;background:rgba(255,255,255,0.22)"></div>
<div class="a" style="left:661px;top:486px;width:1px;height:20px;background:rgba(255,255,255,0.22)"></div>
<div class="a" style="left:757px;top:486px;width:1px;height:20px;background:rgba(255,255,255,0.22)"></div>
<div class="a" style="left:852px;top:486px;width:1px;height:20px;background:rgba(255,255,255,0.22)"></div>
<div class="a" style="left:1508px;top:486px;width:1px;height:20px;background:rgba(255,255,255,0.22)"></div>
<div class="t" style="right:1524.30px;top:322.64px;font-size:12px;line-height:16px;color:#1e1e1e;-webkit-text-stroke:0.2px #1e1e1e;text-align:right;transform:scaleX(0.8400);transform-origin:100% 0;">1</div>
<svg class="a" style="left:55.5px;top:328.60px" width="9" height="6"><path d="M0 0 L8.5 0 L4.25 5 Z" fill="#3b3b3b"/></svg>
<div class="t" style="left:67.7px;top:322.64px;font-size:12px;line-height:16px;color:#1e1e1e;-webkit-text-stroke:0.2px #1e1e1e;transform:scaleX(0.8990);transform-origin:0 0;">PerCFacialRecognition.exe (5008)</div>
<div class="t" style="right:912.40px;top:322.64px;font-size:12px;line-height:16px;color:#f0202a;-webkit-text-stroke:0.2px #f0202a;text-align:right;transform:scaleX(0.8400);transform-origin:100% 0;">13</div>
<div class="t" style="right:816.80px;top:322.64px;font-size:12px;line-height:16px;color:#f0202a;-webkit-text-stroke:0.2px #f0202a;text-align:right;transform:scaleX(0.8400);transform-origin:100% 0;">13.055433</div>
<div class="t" style="right:65.80px;top:322.64px;font-size:12px;line-height:16px;color:#f0202a;-webkit-text-stroke:0.2px #f0202a;text-align:right;transform:scaleX(0.8400);transform-origin:100% 0;">46.80</div>
<div class="a" style="left:1510px;top:326.5px;width:23px;height:10px;background:#1f497d"></div>
<div class="t" style="right:1524.30px;top:341.09px;font-size:12px;line-height:16px;color:#1e1e1e;-webkit-text-stroke:0.2px #1e1e1e;text-align:right;transform:scaleX(0.8400);transform-origin:100% 0;">2</div>
<div class="t" style="right:1255.50px;top:341.09px;font-size:12px;line-height:16px;color:#1e1e1e;-webkit-text-stroke:0.2px #1e1e1e;text-align:right;transform:scaleX(0.8400);transform-origin:100% 0;">5,832</div>
<svg class="a" style="left:323px;top:347.05px" width="9" height="6"><path d="M0 0 L8.5 0 L4.25 5 Z" fill="#3b3b3b"/></svg>
<div class="t" style="left:335.5px;top:341.09px;font-size:12px;line-height:16px;color:#1e1e1e;-webkit-text-stroke:0.2px #1e1e1e;transform:scaleX(0.9100);transform-origin:0 0;">[Root]</div>
<div class="t" style="right:912.40px;top:341.09px;font-size:12px;line-height:16px;color:#f0202a;-webkit-text-stroke:0.2px #f0202a;text-align:right;transform:scaleX(0.8400);transform-origin:100% 0;">7</div>
<div class="t" style="right:816.80px;top:341.09px;font-size:12px;line-height:16px;color:#f0202a;-webkit-text-stroke:0.2px #f0202a;text-align:right;transform:scaleX(0.8400);transform-origin:100% 0;">7.038671</div>
<div class="t" style="right:65.80px;top:341.09px;font-size:12px;line-height:16px;color:#f0202a;-webkit-text-stroke:0.2px #f0202a;text-align:right;transform:scaleX(0.8400);transform-origin:100% 0;">25.23</div>
<div class="a" style="left:1510px;top:344.95px;width:23px;height:10px;border:1.6px solid #c9a13e;border-radius:1px;background:#f0f0f0"></div>
<div class="t" style="right:1524.30px;top:359.54px;font-size:12px;line-height:16px;color:#1e1e1e;-webkit-text-stroke:0.2px #1e1e1e;text-align:right;transform:scaleX(0.8400);transform-origin:100% 0;">3</div>
<svg class="a" style="left:324px;top:363.20px" width="7" height="9"><path d="M1.5 0.8 L5.5 4.3 L1.5 7.8 Z" fill="none" stroke="#555" stroke-width="1.1"/></svg>
<div class="a" style="left:341px;top:363.00px;width:1.5px;height:10.6px;background:#7a4676"></div>
<div class="t" style="left:344.5px;top:359.54px;font-size:12px;line-height:16px;color:#1e1e1e;-webkit-text-stroke:0.2px #1e1e1e;transform:scaleX(0.9150);transform-origin:0 0;">- KernelBase.dll!SwitchToThread</div>
<div class="t" style="right:912.40px;top:359.54px;font-size:12px;line-height:16px;color:#f0202a;-webkit-text-stroke:0.2px #f0202a;text-align:right;transform:scaleX(0.8400);transform-origin:100% 0;">2</div>
<div class="t" style="right:816.80px;top:359.54px;font-size:12px;line-height:16px;color:#f0202a;-webkit-text-stroke:0.2px #f0202a;text-align:right;transform:scaleX(0.8400);transform-origin:100% 0;">2.040693</div>
<div class="t" style="right:65.80px;top:359.54px;font-size:12px;line-height:16px;color:#f0202a;-webkit-text-stroke:0.2px #f0202a;text-align:right;transform:scaleX(0.8400);transform-origin:100% 0;">7.32</div>
<div class="a" style="left:1510px;top:363.4px;width:23px;height:10px;border:1.6px solid #8d70b0;border-radius:1px;background:#f0f0f0"></div>
<div class="t" style="right:1524.30px;top:377.99px;font-size:12px;line-height:16px;color:#1e1e1e;-webkit-text-stroke:0.2px #1e1e1e;text-align:right;transform:scaleX(0.8400);transform-origin:100% 0;">4</div>
<svg class="a" style="left:324px;top:381.65px" width="7" height="9"><path d="M1.5 0.8 L5.5 4.3 L1.5 7.8 Z" fill="none" stroke="#555" stroke-width="1.1"/></svg>
<div class="a" style="left:341px;top:381.45px;width:1.5px;height:10.6px;background:#7a4676"></div>
<div class="t" style="left:344.5px;top:377.99px;font-size:12px;line-height:16px;color:#1e1e1e;-webkit-text-stroke:0.2px #1e1e1e;transform:scaleX(0.9150);transform-origin:0 0;">- libpxcface_idc.dll!ImagePreProcessor::PreProce...</div>
<div class="t" style="right:912.40px;top:377.99px;font-size:12px;line-height:16px;color:#f0202a;-webkit-text-stroke:0.2px #f0202a;text-align:right;transform:scaleX(0.8400);transform-origin:100% 0;">1</div>
<div class="t" style="right:816.80px;top:377.99px;font-size:12px;line-height:16px;color:#f0202a;-webkit-text-stroke:0.2px #f0202a;text-align:right;transform:scaleX(0.8400);transform-origin:100% 0;">0.993348</div>
<div class="t" style="right:65.80px;top:377.99px;font-size:12px;line-height:16px;color:#f0202a;-webkit-text-stroke:0.2px #f0202a;text-align:right;transform:scaleX(0.8400);transform-origin:100% 0;">3.56</div>
<div class="a" style="left:1510px;top:381.85px;width:23px;height:10px;border:1.6px solid #5ab8d0;border-radius:1px;background:#f0f0f0"></div>
<div class="t" style="right:1524.30px;top:396.44px;font-size:12px;line-height:16px;color:#1e1e1e;-webkit-text-stroke:0.2px #1e1e1e;text-align:right;transform:scaleX(0.8400);transform-origin:100% 0;">5</div>
<svg class="a" style="left:324px;top:400.10px" width="7" height="9"><path d="M1.5 0.8 L5.5 4.3 L1.5 7.8 Z" fill="none" stroke="#555" stroke-width="1.1"/></svg>
<div class="a" style="left:341px;top:399.90px;width:1.5px;height:10.6px;background:#7a4676"></div>
<div class="t" style="left:344.5px;top:396.44px;font-size:12px;line-height:16px;color:#1e1e1e;-webkit-text-stroke:0.2px #1e1e1e;transform:scaleX(0.9150);transform-origin:0 0;">- libpxcface_idc.dll!Ola_FaceTracker_DoPreviewF...</div>
<div class="t" style="right:912.40px;top:396.44px;font-size:12px;line-height:16px;color:#f0202a;-webkit-text-stroke:0.2px #f0202a;text-align:right;transform:scaleX(0.8400);transform-origin:100% 0;">1</div>
<div class="t" style="right:816.80px;top:396.44px;font-size:12px;line-height:16px;color:#f0202a;-webkit-text-stroke:0.2px #f0202a;text-align:right;transform:scaleX(0.8400);transform-origin:100% 0;">1.000488</div>
<div class="t" style="right:65.80px;top:396.44px;font-size:12px;line-height:16px;color:#f0202a;-webkit-text-stroke:0.2px #f0202a;text-align:right;transform:scaleX(0.8400);transform-origin:100% 0;">3.59</div>
<div class="a" style="left:1510px;top:400.3px;width:23px;height:10px;border:1.6px solid #3f5f90;border-radius:1px;background:#f0f0f0"></div>
<div class="t" style="right:1524.30px;top:414.89px;font-size:12px;line-height:16px;color:#1e1e1e;-webkit-text-stroke:0.2px #1e1e1e;text-align:right;transform:scaleX(0.8400);transform-origin:100% 0;">6</div>
<div class="a" style="left:341px;top:418.35px;width:1.5px;height:10.6px;background:#7a4676"></div>
<div class="t" style="left:344.5px;top:414.89px;font-size:12px;line-height:16px;color:#1e1e1e;-webkit-text-stroke:0.2px #1e1e1e;transform:scaleX(0.9150);transform-origin:0 0;">- libpxcface_idc.dll!___intel_memcpy</div>
<div class="t" style="right:912.40px;top:414.89px;font-size:12px;line-height:16px;color:#1e1e1e;-webkit-text-stroke:0.2px #1e1e1e;text-align:right;transform:scaleX(0.8400);transform-origin:100% 0;">1</div>
<div class="t" style="right:816.80px;top:414.89px;font-size:12px;line-height:16px;color:#1e1e1e;-webkit-text-stroke:0.2px #1e1e1e;text-align:right;transform:scaleX(0.8400);transform-origin:100% 0;">0.999149</div>
<div class="t" style="right:720.40px;top:414.89px;font-size:12px;line-height:16px;color:#1e1e1e;-webkit-text-stroke:0.2px #1e1e1e;text-align:right;transform:scaleX(0.8540);transform-origin:100% 0;">35.898363429</div>
<div class="t" style="right:65.80px;top:414.89px;font-size:12px;line-height:16px;color:#1e1e1e;-webkit-text-stroke:0.2px #1e1e1e;text-align:right;transform:scaleX(0.8400);transform-origin:100% 0;">3.58</div>
<div class="a" style="left:1510px;top:418.75px;width:23px;height:10px;border:1.6px solid #f7a050;border-radius:1px;background:#f0f0f0"></div>
<div class="t" style="right:1524.30px;top:433.34px;font-size:12px;line-height:16px;color:#1e1e1e;-webkit-text-stroke:0.2px #1e1e1e;text-align:right;transform:scaleX(0.8400);transform-origin:100% 0;">7</div>
<div class="a" style="left:341px;top:436.80px;width:1.5px;height:10.6px;background:#7a4676"></div>
<div class="t" style="left:344.5px;top:433.34px;font-size:12px;line-height:16px;color:#1e1e1e;-webkit-text-stroke:0.2px #1e1e1e;transform:scaleX(0.9150);transform-origin:0 0;">- libpxcface_idc.dll!_h9_ownpi_CalcBorder8pIC</div>
<div class="t" style="right:912.40px;top:433.34px;font-size:12px;line-height:16px;color:#1e1e1e;-webkit-text-stroke:0.2px #1e1e1e;text-align:right;transform:scaleX(0.8400);transform-origin:100% 0;">1</div>
<div class="t" style="right:816.80px;top:433.34px;font-size:12px;line-height:16px;color:#1e1e1e;-webkit-text-stroke:0.2px #1e1e1e;text-align:right;transform:scaleX(0.8400);transform-origin:100% 0;">1.000042</div>
<div class="t" style="right:720.40px;top:433.34px;font-size:12px;line-height:16px;color:#1e1e1e;-webkit-text-stroke:0.2px #1e1e1e;text-align:right;transform:scaleX(0.8540);transform-origin:100% 0;">35.895365981</div>
<div class="t" style="right:65.80px;top:433.34px;font-size:12px;line-height:16px;color:#1e1e1e;-webkit-text-stroke:0.2px #1e1e1e;text-align:right;transform:scaleX(0.8400);transform-origin:100% 0;">3.58</div>
<div class="a" style="left:1510px;top:437.2px;width:23px;height:10px;border:1.6px solid #a83838;border-radius:1px;background:#f0f0f0"></div>
<div class="t" style="right:1524.30px;top:451.79px;font-size:12px;line-height:16px;color:#1e1e1e;-webkit-text-stroke:0.2px #1e1e1e;text-align:right;transform:scaleX(0.8400);transform-origin:100% 0;">8</div>
<div class="a" style="left:341px;top:455.25px;width:1.5px;height:10.6px;background:#7a4676"></div>
<div class="t" style="left:344.5px;top:451.79px;font-size:12px;line-height:16px;color:#1e1e1e;-webkit-text-stroke:0.2px #1e1e1e;transform:scaleX(0.9150);transform-origin:0 0;">- libpxcface_idc.dll!_h9_ownpi_RowCubic8pI</div>
<div class="t" style="right:912.40px;top:451.79px;font-size:12px;line-height:16px;color:#1e1e1e;-webkit-text-stroke:0.2px #1e1e1e;text-align:right;transform:scaleX(0.8400);transform-origin:100% 0;">1</div>
<div class="t" style="right:816.80px;top:451.79px;font-size:12px;line-height:16px;color:#1e1e1e;-webkit-text-stroke:0.2px #1e1e1e;text-align:right;transform:scaleX(0.8400);transform-origin:100% 0;">1.004951</div>
<div class="t" style="right:720.40px;top:451.79px;font-size:12px;line-height:16px;color:#1e1e1e;-webkit-text-stroke:0.2px #1e1e1e;text-align:right;transform:scaleX(0.8540);transform-origin:100% 0;">35.896370932</div>
<div class="t" style="right:65.80px;top:451.79px;font-size:12px;line-height:16px;color:#1e1e1e;-webkit-text-stroke:0.2px #1e1e1e;text-align:right;transform:scaleX(0.8400);transform-origin:100% 0;">3.60</div>
<div class="a" style="left:1510px;top:455.65px;width:23px;height:10px;border:1.6px solid #d48a8a;border-radius:1px;background:#f0f0f0"></div>
<div class="t" style="right:1524.30px;top:470.24px;font-size:12px;line-height:16px;color:#1e1e1e;-webkit-text-stroke:0.2px #1e1e1e;text-align:right;transform:scaleX(0.8400);transform-origin:100% 0;">9</div>
<div class="t" style="right:1255.50px;top:470.24px;font-size:12px;line-height:16px;color:#1e1e1e;-webkit-text-stroke:0.2px #1e1e1e;text-align:right;transform:scaleX(0.8400);transform-origin:100% 0;">5,380</div>
<svg class="a" style="left:323px;top:476.20px" width="9" height="6"><path d="M0 0 L8.5 0 L4.25 5 Z" fill="#3b3b3b"/></svg>
<div class="t" style="left:335.5px;top:470.24px;font-size:12px;line-height:16px;color:#1e1e1e;-webkit-text-stroke:0.2px #1e1e1e;transform:scaleX(0.9100);transform-origin:0 0;">[Root]</div>
<div class="t" style="right:912.40px;top:470.24px;font-size:12px;line-height:16px;color:#f0202a;-webkit-text-stroke:0.2px #f0202a;text-align:right;transform:scaleX(0.8400);transform-origin:100% 0;">3</div>
<div class="t" style="right:816.80px;top:470.24px;font-size:12px;line-height:16px;color:#f0202a;-webkit-text-stroke:0.2px #f0202a;text-align:right;transform:scaleX(0.8400);transform-origin:100% 0;">3.018422</div>
<div class="t" style="right:65.80px;top:470.24px;font-size:12px;line-height:16px;color:#f0202a;-webkit-text-stroke:0.2px #f0202a;text-align:right;transform:scaleX(0.8400);transform-origin:100% 0;">10.82</div>
<div class="a" style="left:1510px;top:474.1px;width:23px;height:10px;border:1.6px solid #3f5f90;border-radius:1px;background:#f0f0f0"></div>
<div class="t" style="right:1524.30px;top:488.69px;font-size:12px;line-height:16px;color:#ffffff;-webkit-text-stroke:0.2px #ffffff;text-align:right;transform:scaleX(0.8400);transform-origin:100% 0;">10</div>
<div class="t" style="left:341.2px;top:488.69px;font-size:12px;line-height:16px;color:#ffffff;-webkit-text-stroke:0.2px #ffffff;transform:scaleX(0.9150);transform-origin:0 0;">KernelBase.dll!SwitchToThread</div>
<div class="t" style="right:912.40px;top:488.69px;font-size:12px;line-height:16px;color:#ffffff;-webkit-text-stroke:0.2px #ffffff;text-align:right;transform:scaleX(0.8400);transform-origin:100% 0;">3</div>
<div class="t" style="right:816.80px;top:488.69px;font-size:12px;line-height:16px;color:#ffffff;-webkit-text-stroke:0.2px #ffffff;text-align:right;transform:scaleX(0.8400);transform-origin:100% 0;">3.018422</div>
<div class="t" style="right:65.80px;top:488.69px;font-size:12px;line-height:16px;color:#ffffff;-webkit-text-stroke:0.2px #ffffff;text-align:right;transform:scaleX(0.8400);transform-origin:100% 0;">10.82</div>
<div class="a" style="left:1510px;top:492.55px;width:23px;height:10px;border:1.6px solid #c05a5a;border-radius:1px;background:#3399ff"></div>
<div class="t" style="right:1524.30px;top:507.84px;font-size:12px;line-height:16px;color:#1e1e1e;-webkit-text-stroke:0.2px #1e1e1e;text-align:right;transform:scaleX(0.8400);transform-origin:100% 0;">11</div>
<div class="t" style="left:341.2px;top:507.84px;font-size:12px;line-height:16px;color:#1e1e1e;-webkit-text-stroke:0.2px #1e1e1e;transform:scaleX(0.9150);transform-origin:0 0;">ntdll.dll!NtYieldExecution</div>
<div class="t" style="right:912.40px;top:507.84px;font-size:12px;line-height:16px;color:#f0202a;-webkit-text-stroke:0.2px #f0202a;text-align:right;transform:scaleX(0.8400);transform-origin:100% 0;">3</div>
<div class="t" style="right:816.80px;top:507.84px;font-size:12px;line-height:16px;color:#f0202a;-webkit-text-stroke:0.2px #f0202a;text-align:right;transform:scaleX(0.8400);transform-origin:100% 0;">3.018422</div>
<div class="t" style="right:65.80px;top:507.84px;font-size:12px;line-height:16px;color:#f0202a;-webkit-text-stroke:0.2px #f0202a;text-align:right;transform:scaleX(0.8400);transform-origin:100% 0;">10.82</div>
<div class="a" style="left:1510px;top:511.0px;width:23px;height:10px;border:1.6px solid #d05050;border-radius:1px;background:#f0f0f0"></div>
<svg class="a" style="left:7px;top:480px" width="1549" height="33"><line x1="0" y1="6.6" x2="1549" y2="6.6" stroke="#111" stroke-width="1.2" stroke-dasharray="3 1.2"/><line x1="0" y1="25.6" x2="1549" y2="25.6" stroke="#111" stroke-width="1.2" stroke-dasharray="3 1.2"/></svg>
<div class="a" style="left:6px;top:296px;width:1565px;height:6px;background:linear-gradient(#f2f2f2 0 1px,#d2d2d2 1px 5px,#e6e6e6 5px 6px)"></div>
<div class="a" style="left:599px;top:301px;width:5px;height:212px;background:#fcd000"></div>
<div class="a" style="left:1427px;top:301px;width:4.5px;height:212px;background:#a6d3e6"></div>
<div class="a" style="left:1556px;top:321px;width:15px;height:192px;background:#f0f0f0"></div>
<svg class="a" style="left:1559px;top:325px" width="10" height="7"><path d="M1 5.5 L5 1.5 L9 5.5" fill="none" stroke="#8a8a8a" stroke-width="1.2"/></svg>
<div class="a" style="left:1556px;top:338px;width:15px;height:175px;background:#cdcdcd"></div>
</body></html>
